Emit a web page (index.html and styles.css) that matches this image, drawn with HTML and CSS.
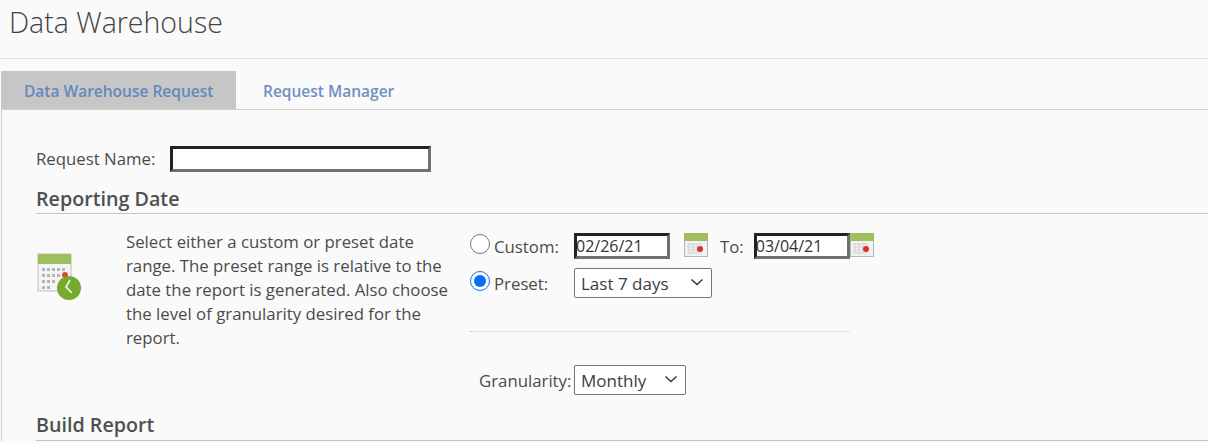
FILE: index.html
```html
<!DOCTYPE html>
<html lang="en">
<head>
    <meta charset="UTF-8">
    <meta name="viewport" content="width=device-width, initial-scale=1.0">
    <title>Data Warehouse</title>
    <link rel="stylesheet" href="styles.css">
</head>
<body>

    <!-- Page title -->
    <h1 class="page-title">Data Warehouse</h1>

    <!-- Tabs -->
    <div class="tabs">
        <a class="tab tab-active">Data Warehouse Request</a>
        <a class="tab">Request Manager</a>
    </div>

    <div class="panel">
        <div class="name-row">
            <label class="name-label" for="requestName">Request Name:</label>
            <input class="bevel-input name-input" type="text" id="requestName">
        </div>

        <h2 class="section-heading">Reporting Date</h2>
        <div class="date-section">
            <div class="date-icon">
                <svg width="46" height="50" viewBox="0 0 46 50">
                    <rect x="1" y="1" width="33" height="37" fill="#f4f4f4" stroke="#bdbdbd"/>
                    <rect x="1" y="1" width="33" height="10" fill="#9fbf5c"/>
                    <g fill="#b4b4b4">
                        <rect x="5" y="15" width="3" height="3"/><rect x="10" y="15" width="3" height="3"/><rect x="15" y="15" width="3" height="3"/><rect x="20" y="15" width="3" height="3"/><rect x="25" y="15" width="3" height="3"/>
                        <rect x="5" y="21" width="3" height="3"/><rect x="10" y="21" width="3" height="3"/><rect x="15" y="21" width="3" height="3"/><rect x="20" y="21" width="3" height="3"/>
                        <rect x="5" y="27" width="3" height="3"/><rect x="10" y="27" width="3" height="3"/><rect x="15" y="27" width="3" height="3"/>
                        <rect x="5" y="33" width="3" height="3"/><rect x="10" y="33" width="3" height="3"/>
                    </g>
                    <circle cx="28" cy="22" r="3" fill="#d9483b"/>
                    <circle cx="32" cy="35" r="12" fill="#74ab2c"/>
                    <path d="M33 27 L29 34 L35 40" fill="none" stroke="#f4f8ea" stroke-width="1.6"/>
                </svg>
            </div>
            <p class="date-help">Select either a custom or preset date range. The preset range is relative to the date the report is generated. Also choose the level of granularity desired for the report.</p>
            <div class="date-options">
                <div class="option-row custom-row">
                    <input class="option-radio" type="radio" name="range" id="custom">
                    <label class="option-label" for="custom">Custom:</label>
                    <input class="bevel-input date-input" type="text" value="02/26/21">
                    <svg class="cal-icon cal-first" width="24" height="24" viewBox="0 0 24 24">
                        <rect x="0.5" y="0.5" width="23" height="23" fill="#f2f2f2" stroke="#b5b5b5"/>
                        <rect x="0" y="0" width="24" height="8" fill="#9fbf5c"/>
                        <path d="M3 11h14M3 14h14M3 17h14M3 20h14M5 10v11M9 10v11M13 10v11M17 10v11" stroke="#d4d4d4"/>
                        <circle cx="16" cy="16" r="3" fill="#d9322a"/>
                    </svg>
                    <span class="to-label">To:</span>
                    <input class="bevel-input date-input" type="text" value="03/04/21">
                    <svg class="cal-icon" width="24" height="24" viewBox="0 0 24 24">
                        <rect x="0.5" y="0.5" width="23" height="23" fill="#f2f2f2" stroke="#b5b5b5"/>
                        <rect x="0" y="0" width="24" height="8" fill="#9fbf5c"/>
                        <path d="M3 11h14M3 14h14M3 17h14M3 20h14M5 10v11M9 10v11M13 10v11M17 10v11" stroke="#d4d4d4"/>
                        <circle cx="16" cy="16" r="3" fill="#d9322a"/>
                    </svg>
                </div>
                <div class="option-row preset-row">
                    <input class="option-radio" type="radio" name="range" id="preset" checked>
                    <label class="option-label" for="preset">Preset:</label>
                    <div class="picker preset-picker">
                        <span>Last 7 days</span>
                        <svg width="14" height="8" viewBox="0 0 14 8"><path d="M1.5 1.5 L7 6.5 L12.5 1.5" fill="none" stroke="#3c3c3c" stroke-width="1.6"/></svg>
                    </div>
                </div>
                <div class="dotted-rule"></div>
                <div class="option-row granularity-row">
                    <label class="granularity-label">Granularity:</label>
                    <div class="picker granularity-picker">
                        <span>Monthly</span>
                        <svg width="14" height="8" viewBox="0 0 14 8"><path d="M1.5 1.5 L7 6.5 L12.5 1.5" fill="none" stroke="#3c3c3c" stroke-width="1.6"/></svg>
                    </div>
                </div>
            </div>
        </div>

        <h2 class="section-heading build-heading">Build Report</h2>
    </div>

</body>
</html>
```
FILE: styles.css
```css
html, body {
    height: 443px;
    overflow: hidden;
}
body {
    margin: 0;
    background: #fafafa;
    color: #4b4b4b;
    font-family: "Open Sans", "Noto Sans", sans-serif;
    font-size: 16.8px;
}
.page-title {
    margin: 0;
    padding: 3px 0 0 9px;
    box-sizing: border-box;
    border-bottom: 1px solid #e1e1e1;
    height: 59px;
    font-size: 28.5px;
    line-height: 38px;
    font-weight: 300;
    color: #444;
}
.tabs {
    display: flex;
    margin: 12px 0 0 1px;
    height: 38px;
}
.tab {
    padding: 0 23px;
    font-size: 15.5px;
    font-weight: 600;
    line-height: 40px;
    color: #6f8fc2;
}
.tab-active {
    width: 235px;
    padding: 0 0 0 23px;
    box-sizing: border-box;
    background: #c6c6c6;
    color: #6488bd;
}
.tab-active + .tab {
    padding-left: 27px;
}
.panel {
    margin-left: 1px;
    padding: 36px 0 0 34px;
    border-top: 1px solid #d0d0d0;
    border-left: 1px solid #d0d0d0;
}
.name-row {
    display: flex;
    align-items: center;
    height: 26px;
}
.name-label {
    width: 134px;
    padding-bottom: 2px;
}
.bevel-input {
    box-sizing: border-box;
    border: 3px solid;
    border-color: #222 #707070 #707070 #222;
    background: #fff;
    padding: 0;
    font-family: inherit;
    font-size: 16px;
    color: #333;
    outline: none;
}
.name-input {
    width: 261px;
    height: 26px;
}
.section-heading {
    margin: 0;
    font-size: 19.7px;
    line-height: 29px;
    font-weight: 600;
    color: #4f4f4f;
    border-bottom: 1px solid #c4c4c4;
}
.name-row + .section-heading {
    margin-top: 12px;
}
.date-section {
    display: flex;
    height: 196px;
}
.date-icon {
    width: 90px;
    padding: 39px 0 0 1px;
    box-sizing: border-box;
    flex: none;
}
.date-help {
    margin: 16px 0 0;
    width: 325px;
    flex: none;
    line-height: 24px;
}
.date-options {
    margin: 19px 0 0 19px;
    width: 405px;
}
.option-row {
    display: flex;
    align-items: center;
}
.option-radio {
    margin: 0;
    width: 20px;
    height: 20px;
    flex: none;
    accent-color: #0a6cf5;
    position: relative;
    top: -2px;
}
.option-label {
    width: 84px;
    padding-left: 4px;
    box-sizing: border-box;
}
.custom-row {
    height: 26px;
}
.date-input {
    width: 96px;
    height: 26px;
    text-indent: -1px;
}
.cal-first {
    margin-left: 14px;
}
.cal-icon {
    flex: none;
    margin-top: -3px;
}
.to-label {
    margin: 0 10px 0 12px;
}
.preset-row {
    margin-top: 9px;
    height: 30px;
}
.picker {
    display: flex;
    align-items: center;
    justify-content: space-between;
    box-sizing: border-box;
    height: 30px;
    padding: 0 7px 0 6px;
    border: 1px solid #767676;
    border-radius: 2px;
    background: #fff;
    font-size: 17px;
    color: #3c3c3c;
}
.picker svg {
    flex: none;
    margin-top: -2px;
}
.preset-picker {
    width: 138px;
}
.dotted-rule {
    width: 380px;
    margin-top: 33px;
    border-top: 1px dotted #c8c8c8;
}
.granularity-row {
    margin-top: 33px;
    padding-left: 9px;
}
.granularity-label {
    width: 95px;
    white-space: nowrap;
}
.granularity-picker {
    width: 112px;
}
.build-heading {
    width: 1172px;
    line-height: 30px;
}
```
